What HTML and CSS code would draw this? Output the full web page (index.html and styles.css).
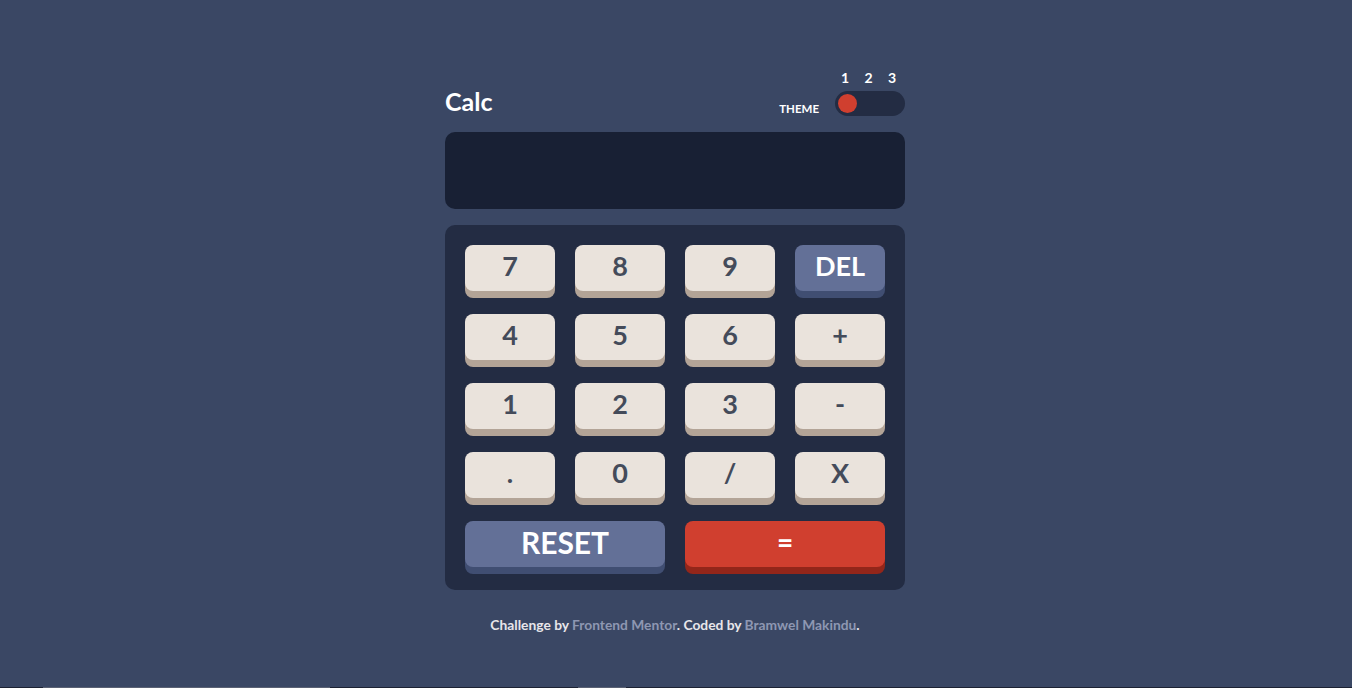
FILE: index.html
```html
<!DOCTYPE html>
<html lang="en">
<head>
<meta charset="utf-8">
<title>Calculator app</title>
<link rel="stylesheet" href="styles.css">
</head>
<body>
<main class="page">
  <header class="top">
    <h1 class="title">Calc</h1>
    <div class="theme">
      <span class="theme-label">THEME</span>
      <div class="theme-switch">
        <div class="theme-nums"><span>1</span><span>2</span><span>3</span></div>
        <div class="toggle"><span class="knob"></span></div>
      </div>
    </div>
  </header>
  <section class="screen"></section>
  <section class="keypad">
    <button class="key">7</button>
    <button class="key">8</button>
    <button class="key">9</button>
    <button class="key key-alt key-del">DEL</button>
    <button class="key">4</button>
    <button class="key">5</button>
    <button class="key">6</button>
    <button class="key key-op">+</button>
    <button class="key">1</button>
    <button class="key">2</button>
    <button class="key">3</button>
    <button class="key key-op">-</button>
    <button class="key">.</button>
    <button class="key">0</button>
    <button class="key">/</button>
    <button class="key">X</button>
    <button class="key key-alt key-wide key-reset">RESET</button>
    <button class="key key-eq key-wide">=</button>
  </section>
  <footer class="attribution">
    Challenge by <a href="#">Frontend Mentor</a>. Coded by <a href="#">Bramwel Makindu</a>.
  </footer>
</main>
<div class="edge">
  <span class="edge-a"></span><span class="edge-gap1"></span><span class="edge-b"></span>
</div>
</body>
</html>
```

FILE: styles.css
```css
* { box-sizing: border-box; }

html, body {
  margin: 0;
  padding: 0;
}

body {
  height: 688px;
  overflow: hidden;
  background: #3a4764;
  font-family: "Lato", "Open Sans", "Liberation Sans", sans-serif;
  font-weight: 700;
  color: #ffffff;
  display: flex;
  flex-direction: column;
}

.page {
  width: 460px;
  margin-left: calc(50% - 231px);
  padding-top: 70px;
  flex: none;
}

.top {
  display: flex;
  justify-content: space-between;
  align-items: flex-end;
  height: 46px;
  margin-bottom: 16px;
}

.title {
  margin: 0;
  font-size: 25px;
  line-height: 30px;
  font-weight: 700;
  color: #ffffff;
}

.theme {
  display: flex;
  align-items: flex-end;
  gap: 16px;
}

.theme-label {
  font-size: 11.5px;
  line-height: 14px;
  font-weight: 700;
  color: #ffffff;
}

.theme-switch {
  display: flex;
  flex-direction: column;
  gap: 5px;
  width: 70px;
}

.theme-nums {
  display: flex;
  justify-content: space-between;
  padding: 0 9px 0 6px;
  font-size: 14px;
  line-height: 16px;
  height: 16px;
  font-weight: 700;
}

.toggle {
  height: 25px;
  border-radius: 13px;
  background: #232c43;
  display: flex;
  align-items: center;
  padding: 0 3px;
}

.knob {
  width: 19px;
  height: 19px;
  border-radius: 50%;
  background: #d03f2f;
}

.screen {
  height: 77px;
  border-radius: 10px;
  background: #182034;
  margin-bottom: 16px;
}

.keypad {
  background: #232c43;
  border-radius: 10px;
  padding: 20px 20px 23px;
  display: grid;
  grid-template-columns: repeat(4, 90px);
  column-gap: 20px;
  row-gap: 23px;
}

.key {
  height: 46px;
  border: none;
  border-radius: 8px;
  background: #eae3dc;
  box-shadow: 0 7px 0 #b3a497;
  color: #444b5a;
  font-family: inherit;
  font-weight: 700;
  font-size: 27px;
  line-height: 30px;
  padding: 0 0 4px;
  margin: 0;
  display: flex;
  align-items: center;
  justify-content: center;
  cursor: pointer;
}

.key-op {
  font-size: 27px;
}

.key-alt {
  background: #637097;
  box-shadow: 0 7px 0 #404e72;
  color: #ffffff;
}

.key-del {
  font-size: 27px;
}

.key-reset {
  font-size: 30px;
}

.key-wide {
  grid-column: span 2;
}

.key-eq {
  background: #d03f2f;
  box-shadow: 0 7px 0 #93261a;
  color: #ffffff;
  font-size: 28px;
}

.attribution {
  margin-top: 27px;
  text-align: center;
  font-size: 13.8px;
  line-height: 16px;
  color: #e8e6ea;
}

.attribution a {
  color: #8e97b2;
  text-decoration: none;
}

.edge {
  margin-top: auto;
  height: 1px;
  background: #1c2233;
  display: flex;
  flex: none;
}

.edge-a {
  margin-left: 43px;
  width: 287px;
  background: #5b6274;
}

.edge-gap1 {
  width: 248px;
}

.edge-b {
  width: 48px;
  background: #5b6274;
}
```
